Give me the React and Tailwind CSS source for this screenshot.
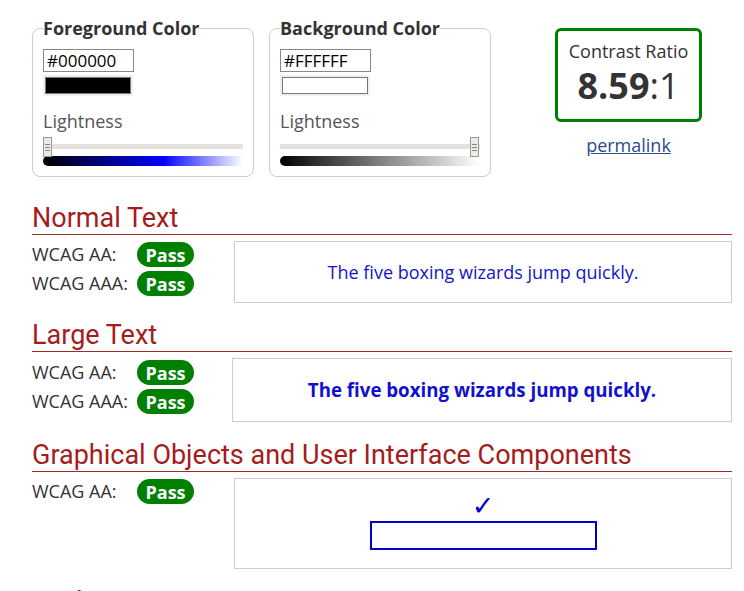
const Thumb = () => (
  <div className="w-[9px] h-[20px] bg-[#ece9e5] border border-[#999] flex flex-col items-center justify-center gap-[2px]">
    <div className="w-[5px] h-px bg-[#888]" />
    <div className="w-[5px] h-px bg-[#888]" />
    <div className="w-[5px] h-px bg-[#888]" />
  </div>
);

const ColorPicker = ({ title, hex, swatch, value, gradient }) => (
  <fieldset className="w-[221px] border border-[#ccc] rounded-lg pl-[10px] pr-[10px] pb-[10px]">
    <legend className="font-bold text-[18px] leading-[24px] text-[#333] px-0">{title}</legend>
    <input
      readOnly
      value={hex}
      className="block w-[91px] h-[23px] border border-[#888] px-[3px] text-[17px] leading-[21px] text-black mt-[9px]"
    />
    <div className="w-[90px] h-[21px] bg-[#efefef] px-[2px] py-[2px] mt-[3px]">
      <div className={`w-full h-full border border-[#777] ${swatch}`} />
    </div>
    <div className="text-[18px] text-[#555] mt-[12px] leading-[26px]">Lightness</div>
    <div className="relative w-[200px] h-[20px] mt-[3px]">
      <div className="absolute left-0 right-0 top-[7px] h-[5px] bg-[#e5e1dc]" />
      <div className={`absolute top-0 ${value === "min" ? "left-0" : "right-[1px]"}`}>
        <Thumb />
      </div>
    </div>
    <div className={`w-[200px] h-[10px] rounded-l-full mt-[-1px] ${gradient}`} />
  </fieldset>
);

const Badge = () => (
  <span className="inline-flex items-center justify-center w-[57px] h-[25px] rounded-full bg-[#008000] text-white font-bold text-[18px] leading-none">
    Pass
  </span>
);

const Row = ({ label }) => (
  <div className="flex items-center h-[25px]">
    <span className="w-[105px] text-[18px] text-[#333]">{label}</span>
    <Badge />
  </div>
);

const Heading = ({ children }) => (
  <h2
    className="text-[27px] leading-[30px] text-[#a51c1c] border-b border-[#a52a2a] pb-[1px]"
    style={{ fontFamily: "Roboto, sans-serif" }}
  >
    {children}
  </h2>
);

export default function App() {
  return (
    <div
      className="w-[744px] h-[591px] overflow-hidden bg-white pl-[32px] pr-[12px] pt-[16px]"
      style={{ fontFamily: "'Open Sans', sans-serif" }}
    >
      <div className="flex items-start">
        <ColorPicker
          title="Foreground Color"
          hex="#000000"
          swatch="bg-black"
          value="min"
          gradient="bg-[linear-gradient(to_right,#000_0%,#0000ff_60%,#fff_100%)]"
        />
        <div className="ml-[15px]">
          <ColorPicker
            title="Background Color"
            hex="#FFFFFF"
            swatch="bg-white"
            value="max"
            gradient="bg-[linear-gradient(to_right,#000_0%,#fff_100%)]"
          />
        </div>
        <div className="ml-[64px] mt-[12px] flex flex-col items-center">
          <div className="w-[147px] h-[94px] border-[3px] border-[#008000] rounded-md flex flex-col items-center pt-[8px]">
            <div className="text-[18px] leading-[24px] text-[#333]">Contrast Ratio</div>
            <div className="text-[36px] leading-[44px] text-[#333] mt-[1px]">
              <span className="font-bold">8.59</span>:1
            </div>
          </div>
          <a href="#" className="mt-[10px] text-[18px] text-[#2b4b8c] underline">permalink</a>
        </div>
      </div>

      <div className="mt-[26px]">
        <Heading>Normal Text</Heading>
        <div className="flex mt-[6px]">
          <div className="w-[202px] flex flex-col gap-[4px] pt-px">
            <Row label="WCAG AA:" />
            <Row label="WCAG AAA:" />
          </div>
          <div className="flex-1 h-[62px] border border-[#ccc] flex items-center justify-center text-[18px] text-[#1414c8]">
            The five boxing wizards jump quickly.
          </div>
        </div>
      </div>

      <div className="mt-[17px]">
        <Heading>Large Text</Heading>
        <div className="flex mt-[6px]">
          <div className="w-[200px] flex flex-col gap-[4px] pt-[2px]">
            <Row label="WCAG AA:" />
            <Row label="WCAG AAA:" />
          </div>
          <div className="flex-1 h-[64px] border border-[#ccc] flex items-center justify-center text-[18.7px] font-bold text-[#1010d0]">
            The five boxing wizards jump quickly.
          </div>
        </div>
      </div>

      <div className="mt-[18px]">
        <Heading>Graphical Objects and User Interface Components</Heading>
        <div className="flex mt-[6px]">
          <div className="w-[202px] pt-px">
            <Row label="WCAG AA:" />
          </div>
          <div className="flex-1 h-[91px] border border-[#ccc] flex flex-col items-center pt-[13px]">
            <span className="text-[27px] leading-[28px] text-[#0000cc]" style={{ fontFamily: "'DejaVu Sans', sans-serif" }}>✓</span>
            <div className="w-[227px] h-[29px] border-2 border-[#0000cc] mt-[1px]" />
          </div>
        </div>
      </div>

      <div className="mt-[18px]">
        <Heading>Explanation</Heading>
      </div>
    </div>
  );
}
